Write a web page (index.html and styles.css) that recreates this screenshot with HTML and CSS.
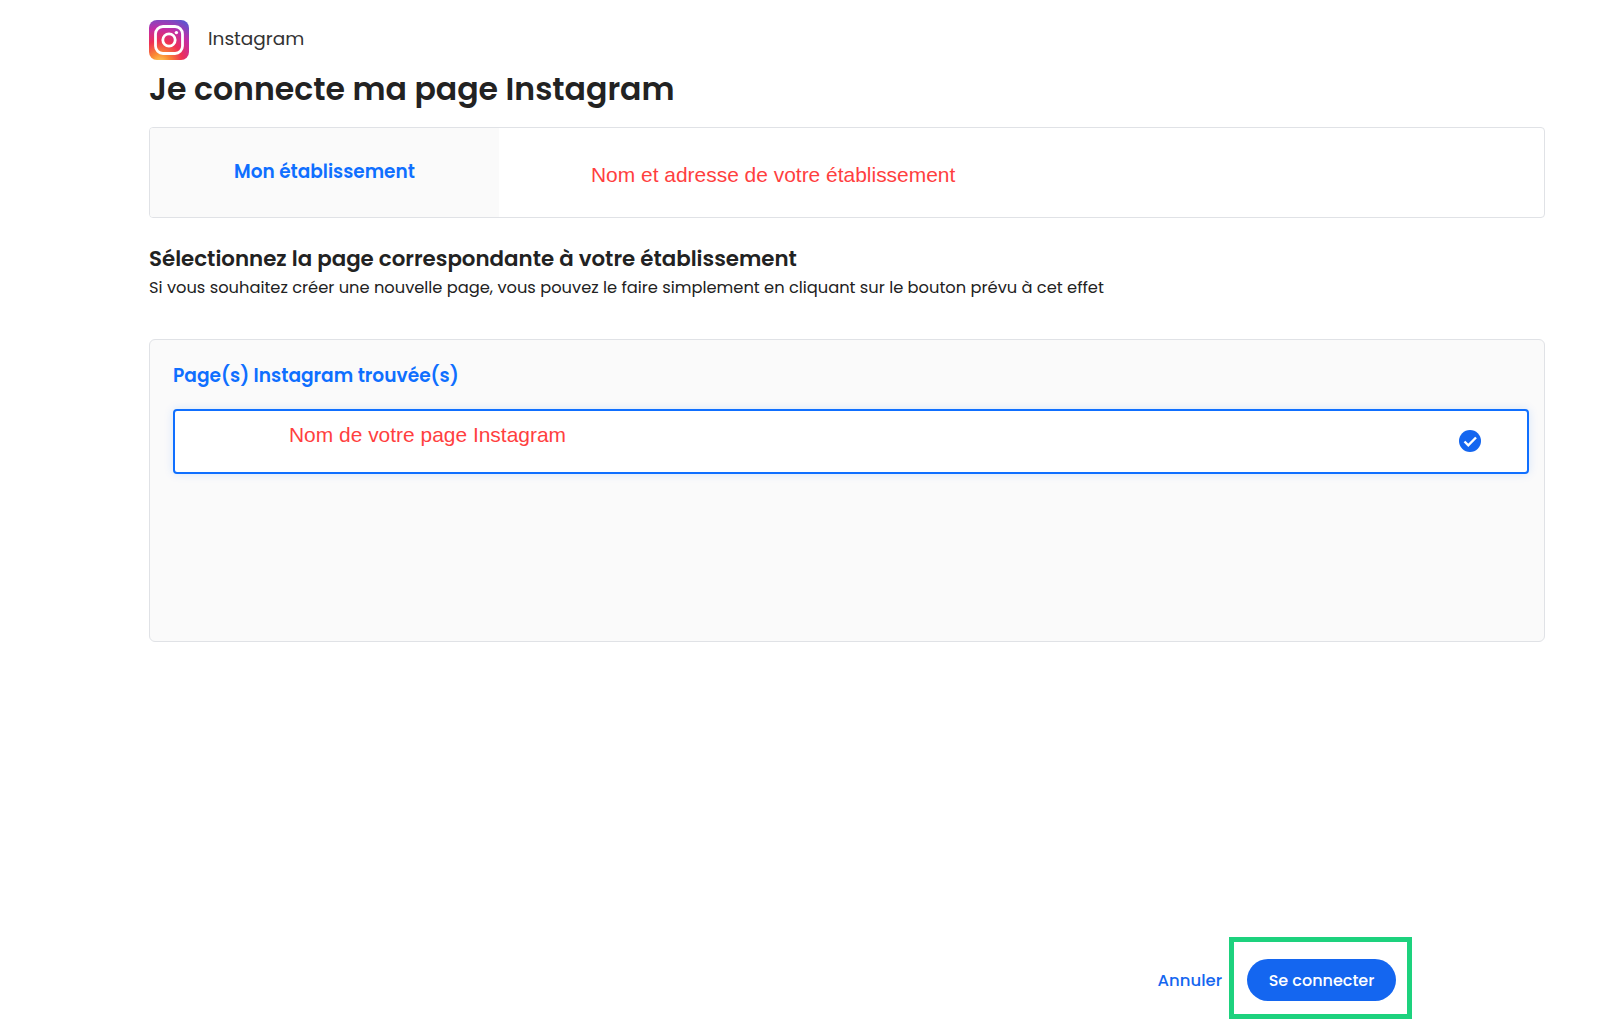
FILE: index.html
```html
<!DOCTYPE html>
<html lang="fr">
<head>
<meta charset="utf-8">
<title>Instagram</title>
<link rel="stylesheet" href="styles.css">
</head>
<body>
<main class="page">
  <header class="brand">
    <svg class="logo" viewBox="0 0 40 40" aria-hidden="true">
      <defs>
        <radialGradient id="ig" cx="28%" cy="108%" r="125%">
          <stop offset="0" stop-color="#fed65a"/>
          <stop offset=".2" stop-color="#fa8a32"/>
          <stop offset=".45" stop-color="#ee2f55"/>
          <stop offset=".7" stop-color="#c22da6"/>
          <stop offset="1" stop-color="#4f5bd5"/>
        </radialGradient>
      </defs>
      <rect width="40" height="40" rx="8" fill="url(#ig)"/>
      <rect x="6.5" y="6.5" width="27" height="27" rx="7.5" fill="none" stroke="#fff" stroke-width="2.8"/>
      <circle cx="20" cy="20" r="6.2" fill="none" stroke="#fff" stroke-width="2.8"/>
      <circle cx="27.4" cy="12.6" r="1.7" fill="#fff"/>
    </svg>
    <span class="brand-name">Instagram</span>
  </header>
  <h1 class="title">Je connecte ma page Instagram</h1>
  <section class="venue">
    <div class="venue-label">Mon établissement</div>
    <div class="venue-value">Nom et adresse de votre établissement</div>
  </section>
  <h2 class="subtitle">Sélectionnez la page correspondante à votre établissement</h2>
  <p class="hint">Si vous souhaitez créer une nouvelle page, vous pouvez le faire simplement en cliquant sur le bouton prévu à cet effet</p>
  <section class="panel">
    <h3 class="panel-title">Page(s) Instagram trouvée(s)</h3>
    <div class="option">
      <span class="option-name">Nom de votre page Instagram</span>
      <svg class="check" viewBox="0 0 22 22" aria-hidden="true">
        <circle cx="11" cy="11" r="11" fill="#1466f0"/>
        <path d="M5.5 11.5l3.8 3.8L17 7.5" fill="none" stroke="#fff" stroke-width="2.4"/>
      </svg>
    </div>
  </section>
  <footer class="actions">
    <a class="cancel">Annuler</a>
    <div class="highlight"><button class="connect">Se connecter</button></div>
  </footer>
</main>
</body>
</html>
```
FILE: styles.css
```css
* { box-sizing: border-box; }
html, body { margin: 0; height: 100%; }
body { background: #fff; font-family: "Poppins", "Inter", "Noto Sans", sans-serif; color: #222; overflow: hidden; }
.page { height: 1019px; padding: 20px 52px 0 149px; display: flex; flex-direction: column; }
.brand { display: flex; align-items: center; gap: 19px; height: 40px; }
.logo { width: 40px; height: 40px; flex: none; }
.brand-name { font-size: 18.5px; position: relative; top: -2px; color: #333; }
.title { margin: 7px 0 0; font-size: 31.55px; line-height: 44px; font-weight: 600; }
.venue { margin-top: 16px; height: 91px; display: flex; border: 1px solid #e0e2e6; border-radius: 4px; overflow: hidden; }
.venue-label { width: 349px; background: #fafafa; display: flex; align-items: center; justify-content: center; color: #0f6fff; font-size: 18.5px; font-weight: 600; padding-bottom: 3px; }
.venue-value { padding: 34px 0 0 92px; color: #ff3f3f; font: 20.95px/26px "Liberation Sans", sans-serif; }
.subtitle { margin: 28px 0 0; font-size: 21.35px; line-height: 26px; font-weight: 600; }
.hint { margin: 4px 0 0; font-size: 16.27px; line-height: 24px; color: #222; }
.panel { margin-top: 39px; height: 303px; padding: 23px 15px 0 23px; background: #fafafa; border: 1px solid #e0e2e6; border-radius: 6px; }
.panel-title { margin: 0; font-size: 18.6px; line-height: 26px; font-weight: 600; color: #0f6fff; }
.option { margin-top: 20px; height: 65px; display: flex; justify-content: space-between; align-items: center; padding-right: 46px; background: #fff; border: 2px solid #0f6fff; border-radius: 4px; box-shadow: 0 0 10px rgba(15, 111, 255, .15); }
.option-name { align-self: flex-start; margin: 11px 0 0 114px; color: #ff3f3f; font: 20.95px/26px "Liberation Sans", sans-serif; }
.check { width: 22px; height: 22px; flex: none; position: relative; top: -1px; }
.actions { margin-top: auto; display: flex; justify-content: flex-end; align-items: flex-start; gap: 7px; padding-right: 133px; }
.cancel { margin-top: 31px; color: #1466f0; font-size: 16.5px; line-height: 26px; font-weight: 500; }
.highlight { width: 183px; height: 82px; padding: 17px 0 0 13px; border: 5px solid #1dd27e; }
.connect { width: 149px; height: 42px; border: 0; border-radius: 21px; background: #1466f0; color: #fff; font: 500 16px "Poppins", "Inter", sans-serif; }
```
